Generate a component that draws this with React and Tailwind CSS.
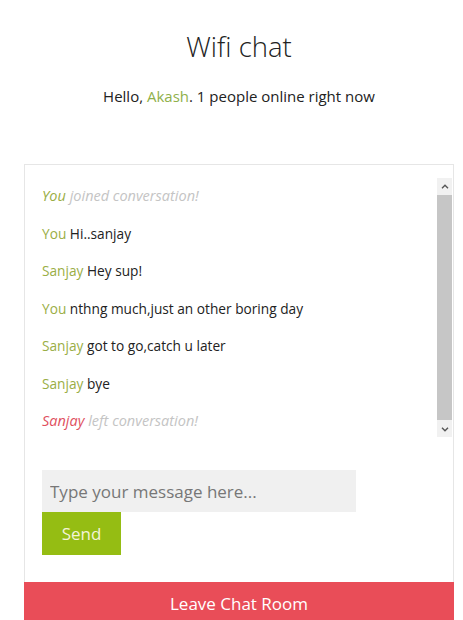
import React from 'react';

const messages = [
  { name: 'You', text: 'joined conversation!', kind: 'join' },
  { name: 'You', text: 'Hi..sanjay' },
  { name: 'Sanjay', text: 'Hey sup!' },
  { name: 'You', text: 'nthng much,just an other boring day' },
  { name: 'Sanjay', text: 'got to go,catch u later' },
  { name: 'Sanjay', text: 'bye' },
  { name: 'Sanjay', text: 'left conversation!', kind: 'leave' },
];

function Message({ msg }) {
  if (msg.kind === 'join') {
    return (
      <p className="italic h-[20px] leading-[20px] text-[14.5px]">
        <span className="text-[#9aae45]">{msg.name}</span>{' '}
        <span className="text-[#c4c4c4]">{msg.text}</span>
      </p>
    );
  }
  if (msg.kind === 'leave') {
    return (
      <p className="italic h-[20px] leading-[20px] text-[14.5px]">
        <span className="text-[#e0505e]">{msg.name}</span>{' '}
        <span className="text-[#c4c4c4]">{msg.text}</span>
      </p>
    );
  }
  return (
    <p className="h-[20px] leading-[20px]">
      <span className="text-[#9aae45]">{msg.name}</span>{' '}
      <span className="text-[#222]">{msg.text}</span>
    </p>
  );
}

function ScrollBar() {
  return (
    <div className="w-[15px] flex flex-col bg-[#f1f1f1]">
      <div className="h-[16px] flex items-center justify-center">
        <svg width="8" height="5" viewBox="0 0 8 5">
          <path d="M1 4.2 L4 1.2 L7 4.2" fill="none" stroke="#555" strokeWidth="1.4" />
        </svg>
      </div>
      <div className="flex-1 bg-[#c6c6c6] my-[1px]" />
      <div className="h-[16px] flex items-center justify-center">
        <svg width="8" height="5" viewBox="0 0 8 5">
          <path d="M1 0.8 L4 3.8 L7 0.8" fill="none" stroke="#555" strokeWidth="1.4" />
        </svg>
      </div>
    </div>
  );
}

export default function App() {
  return (
    <div className="w-[463px] h-[620px] bg-white overflow-hidden" style={{ fontFamily: '"Open Sans", sans-serif' }}>
      <div className="w-[430px] ml-[24px]">
        <header className="text-center">
          <h1 className="pt-[28px] text-[27.5px] leading-[38px] font-light text-[#222]">Wifi chat</h1>
          <p className="mt-[20px] text-[15px] leading-[20px] text-[#222]">
            Hello, <span className="text-[#8fb04a]">Akash</span>. 1 people online right now
          </p>
        </header>

        <div className="mt-[58px] border border-[#e6e6e6] border-b-0 pt-[13px]">
          <div className="flex h-[259px] mr-[1px]">
            <div className="flex-1 pl-[17px] pt-[8px] flex flex-col gap-[17.5px] text-[13.7px]">
              {messages.map((m, i) => (
                <Message key={i} msg={m} />
              ))}
            </div>
            <ScrollBar />
          </div>

          <div className="pl-[17px] pt-[33px] pb-[27px]">
            <input
              type="text"
              placeholder="Type your message here..."
              className="block w-[314px] h-[42px] bg-[#f0f0f0] px-[8px] text-[17px] text-[#333] placeholder:text-[#777] outline-none"
            />
            <button className="block w-[79px] h-[43px] bg-[#95bd13] text-[#f4f4d8] text-[17px]">Send</button>
          </div>

          <button className="block w-[calc(100%+2px)] -mx-[1px] h-[44px] bg-[#e94d58] text-white text-[17px] leading-[44px]">
            Leave Chat Room
          </button>
        </div>
      </div>
    </div>
  );
}
